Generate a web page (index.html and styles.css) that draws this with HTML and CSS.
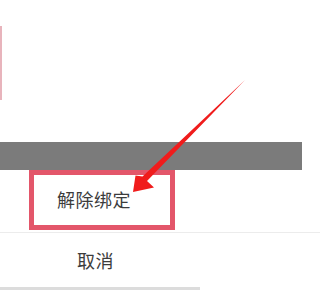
FILE: index.html
```html
<!DOCTYPE html>
<html lang="zh">
<head>
<meta charset="utf-8">
<link rel="stylesheet" href="styles.css">
</head>
<body>
<div class="screen">
  <div class="top">
    <div class="edge"></div>
  </div>
  <div class="bar-row">
    <div class="bar"></div>
  </div>
  <div class="sheet">
    <div class="item item-first">
      <div class="highlight"><span class="label">解除绑定</span></div>
    </div>
    <div class="sep"></div>
    <div class="item item-cancel"><span class="label">取消</span></div>
    <div class="bottom-line"></div>
  </div>
  <svg class="arrow" width="320" height="297" viewBox="0 0 320 297">
    <polygon points="133,192 135.5,175.5 142.5,176.5 245,80 147,181 154,187.5" fill="#f01c1c"/>
  </svg>
</div>
</body>
</html>
```
FILE: styles.css
```css
html, body {
  margin: 0;
  padding: 0;
  background: #ffffff;
}
.screen {
  position: relative;
  width: 320px;
  height: 297px;
  overflow: hidden;
  font-family: "Noto Sans CJK SC", "Noto Sans", sans-serif;
  background: #ffffff;
}
.top {
  height: 142px;
  display: flex;
  flex-direction: column;
  padding-top: 26px;
  box-sizing: border-box;
}
.edge {
  width: 2px;
  height: 74px;
  background: #e8b4bc;
}
.bar-row {
  height: 28px;
  display: flex;
}
.bar {
  width: 302px;
  background: #7b7b7b;
}
.sheet {
  display: flex;
  flex-direction: column;
}
.item-first {
  height: 60px;
  padding-left: 29px;
  display: flex;
}
.highlight {
  width: 146px;
  height: 60px;
  box-sizing: border-box;
  border: 5px solid #e3566a;
  display: flex;
  align-items: center;
  padding-left: 23px;
  padding-bottom: 2px;
}
.label {
  font-size: 18px;
  color: #3c3c3c;
  letter-spacing: 0.5px;
}
.sep {
  height: 1px;
  background: #ececec;
  margin-top: 2px;
}
.item-cancel {
  height: 54px;
  display: flex;
  align-items: center;
  padding-left: 77px;
}
.bottom-line {
  height: 3px;
  width: 200px;
  background: #dcdcdc;
}
.arrow {
  position: absolute;
  left: 0;
  top: 0;
}
```
